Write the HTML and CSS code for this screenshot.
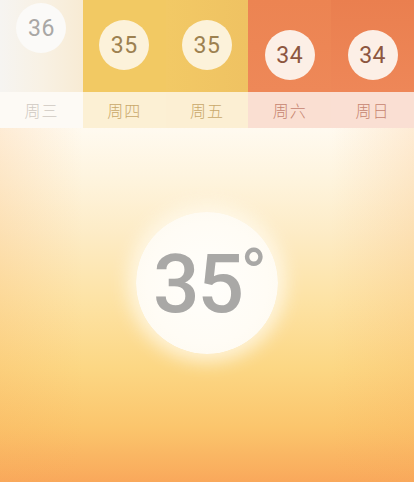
FILE: index.html
```html
<!DOCTYPE html>
<html lang="zh">
<head>
<meta charset="utf-8">
<title>天气</title>
<link rel="stylesheet" href="styles.css">
</head>
<body>
<div class="screen">
  <div class="week">
    <div class="day d1">
      <div class="top pos-high"><div class="bubble">36</div></div>
      <div class="label">周三</div>
    </div>
    <div class="day d2">
      <div class="top pos-mid"><div class="bubble">35</div></div>
      <div class="label">周四</div>
    </div>
    <div class="day d3">
      <div class="top pos-mid"><div class="bubble">35</div></div>
      <div class="label">周五</div>
    </div>
    <div class="day d4">
      <div class="top pos-low"><div class="bubble">34</div></div>
      <div class="label">周六</div>
    </div>
    <div class="day d5">
      <div class="top pos-low"><div class="bubble">34</div></div>
      <div class="label">周日</div>
    </div>
  </div>
  <div class="main">
    <div class="sun">
      <span class="temp">35</span><span class="deg">°</span>
    </div>
  </div>
</div>
</body>
</html>
```

FILE: styles.css
```css
html, body {
  margin: 0;
  padding: 0;
}
body {
  width: 414px;
  height: 482px;
  overflow: hidden;
  font-family: Roboto, "Noto Sans", "Noto Sans CJK SC", sans-serif;
}
.screen {
  display: flex;
  flex-direction: column;
  height: 482px;
}
.week {
  display: flex;
  height: 128px;
}
.day {
  flex: 1;
  display: flex;
  flex-direction: column;
}
.top {
  height: 92px;
  display: flex;
  justify-content: center;
  box-sizing: border-box;
}
.pos-high { padding-top: 3px; }
.pos-mid { padding-top: 20px; }
.pos-low { padding-top: 30px; }
.bubble {
  width: 50px;
  height: 50px;
  border-radius: 50%;
  display: flex;
  align-items: center;
  justify-content: center;
  font-size: 23px;
  letter-spacing: 0.5px;
}
.label {
  height: 36px;
  display: flex;
  align-items: center;
  justify-content: center;
  font-family: "Noto Sans CJK SC", sans-serif;
  font-size: 16px;
  font-weight: 300;
  letter-spacing: 1px;
}
.d1 .top { background: linear-gradient(to right, #f6f4f1, #f8f1e4 50%, #f8ebd4); }
.d1 .bubble { background: #fbfaf8; color: #a9a7a5; }
.d1 .label { background: #fdfaf5; color: #cfc9c2; }
.d2 .top { background: #f2c963; }
.d2 .bubble { background: #fcf2da; color: #9d8150; }
.d2 .label { background: #fcf0d4; color: #c9a86a; }
.d3 .top { background: linear-gradient(to right, #f2c965, #efc262); }
.d3 .bubble { background: #fcf2da; color: #9d8150; }
.d3 .label { background: #fcefd3; color: #c9a86a; }
.d4 .top { background: linear-gradient(to bottom, #ec8452, #ee8858); }
.d4 .bubble { background: #fcefe6; color: #8d5640; }
.d4 .label { background: #fadfd2; color: #c68470; }
.d5 .top { background: linear-gradient(to bottom, #ea7f4f, #ee8758); }
.d5 .bubble { background: #fcefe6; color: #8d5640; }
.d5 .label { background: #fadfd3; color: #c68470; }
.main {
  flex: 1;
  display: flex;
  justify-content: center;
  padding-top: 84px;
  box-sizing: border-box;
  background:
    linear-gradient(to right, rgba(248,170,90,0.18), rgba(255,255,255,0) 20%, rgba(255,255,255,0) 80%, rgba(248,170,90,0.18)),
    linear-gradient(to bottom, #fffaf0 0px, #fef4de 50px, #fdebc4 110px, #fde3a6 170px, #fcd784 240px, #fbc56c 300px, #f9a85b 354px);
}
.sun {
  width: 142px;
  height: 142px;
  border-radius: 50%;
  background: radial-gradient(circle, #fffefb 0%, #fffcf5 60%, #fdf8ec 100%);
  box-shadow: 0 0 18px 8px rgba(255, 251, 240, 0.75);
  display: flex;
  align-items: flex-start;
  justify-content: center;
  color: #a9a8a6;
  padding-left: 6px;
  box-sizing: border-box;
}
.temp {
  font-size: 82px;
  font-weight: 500;
  line-height: 1;
  margin-top: 31px;
  letter-spacing: -2px;
}
.deg {
  font-size: 72px;
  line-height: 1;
  margin-top: 28px;
  margin-left: -2px;
}
```
